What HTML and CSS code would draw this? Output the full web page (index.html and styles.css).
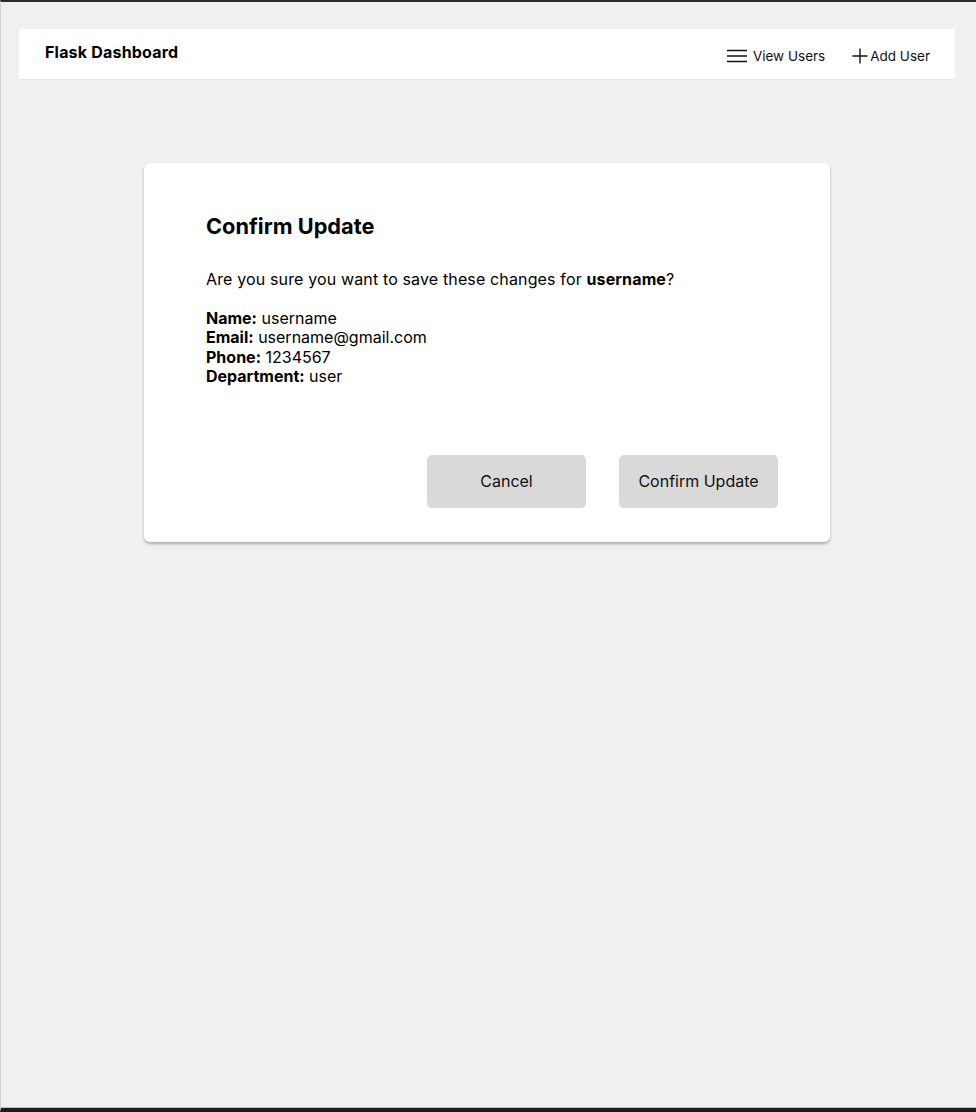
FILE: index.html
```html
<!DOCTYPE html>
<html lang="en">
<head>
<meta charset="utf-8">
<title>Flask Dashboard</title>
<link rel="stylesheet" href="styles.css">
</head>
<body>
<div class="frame">
  <header class="navbar">
    <div class="brand">Flask Dashboard</div>
    <nav class="nav">
      <a class="nav-link" href="#">
        <svg class="icon-menu" width="20" height="14" viewBox="0 0 20 14" aria-hidden="true">
          <path d="M0 1.5H20M0 7H20M0 12.5H20" stroke="#111" stroke-width="1.5" fill="none"/>
        </svg>
        <span>View Users</span>
      </a>
      <a class="nav-link add" href="#">
        <svg class="icon-plus" width="16" height="16" viewBox="0 0 16 16" aria-hidden="true">
          <path d="M8 0.5V15.5M0.5 8H15.5" stroke="#111" stroke-width="1.4" fill="none"/>
        </svg>
        <span>Add User</span>
      </a>
    </nav>
  </header>

  <main class="card">
    <h2 class="card-title">Confirm Update</h2>
    <p class="question">Are you sure you want to save these changes for <strong>username</strong>?</p>
    <div class="details">
      <div><strong>Name:</strong> username</div>
      <div><strong>Email:</strong> username@gmail.com</div>
      <div><strong>Phone:</strong> 1234567</div>
      <div><strong>Department:</strong> user</div>
    </div>
    <div class="actions">
      <button class="btn" type="button">Cancel</button>
      <button class="btn" type="button">Confirm Update</button>
    </div>
  </main>
</div>
</body>
</html>
```

FILE: styles.css
```css
* { box-sizing: border-box; }

html, body {
  margin: 0;
  padding: 0;
  height: 100%;
}

body {
  font-family: Inter, "Noto Sans", "Liberation Sans", sans-serif;
  color: #000;
  background: #1e1e1e;
}

.frame {
  height: 1112px;
  background: #f0f0f0;
  border-top: 2px solid #2a2a2a;
  border-left: 1px solid #d2d2d2;
  border-bottom: 4px solid #1e1e1e;
  padding: 27px 21px 0 18px;
  box-shadow: inset 0 -1px 0 #bdbdbd;
}

.navbar {
  height: 51px;
  background: #fff;
  border-bottom: 1px solid #e6e6e6;
  display: flex;
  justify-content: space-between;
  align-items: flex-start;
  padding: 13px 25px 0 26px;
}

.brand {
  font-size: 16px;
  font-weight: 700;
  line-height: 20px;
  letter-spacing: 0.2px;
}

.nav {
  display: flex;
  gap: 27px;
  margin-top: 4px;
}

.nav-link {
  display: flex;
  align-items: center;
  gap: 6px;
  color: #111;
  text-decoration: none;
  font-size: 13.5px;
  line-height: 20px;
}

.nav-link.add { gap: 2px; }

.icon-menu, .icon-plus { display: block; }

.card {
  width: 686px;
  margin: 83px auto 0;
  background: #fff;
  border-radius: 6px;
  box-shadow: 0 2px 3px rgba(0, 0, 0, 0.28);
  padding: 50px 52px 34px 62px;
}

.card-title {
  margin: 0;
  font-size: 21.75px;
  font-weight: 700;
  line-height: 27px;
}

.question {
  margin: 30px 0 0;
  font-size: 16px;
  line-height: 19.5px;
  letter-spacing: 0.14px;
}

.details {
  margin-top: 19px;
  font-size: 16px;
  line-height: 19.6px;
}

.actions {
  display: flex;
  justify-content: flex-end;
  gap: 33px;
  margin-top: 68px;
}

.btn {
  width: 159px;
  height: 53px;
  border: none;
  border-radius: 5px;
  background: #d9d9d9;
  font-family: inherit;
  font-size: 16px;
  color: #111;
  cursor: pointer;
}
```
